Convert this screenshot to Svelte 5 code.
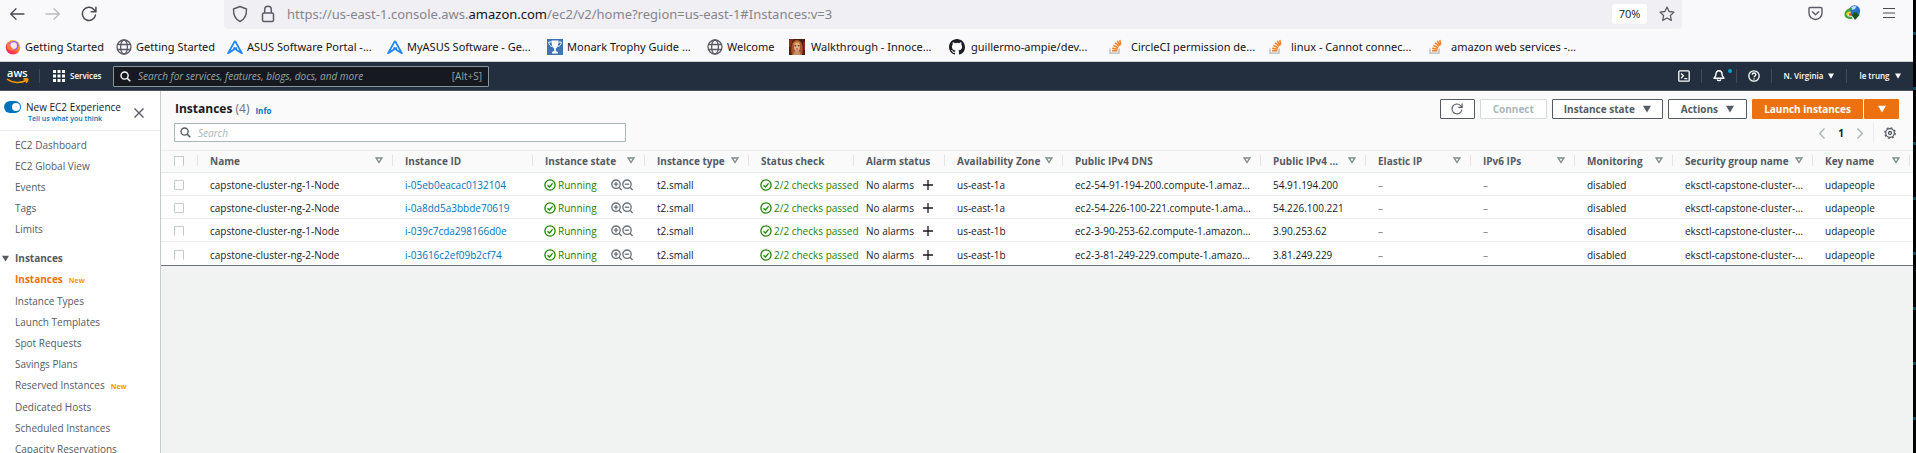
<script>
  const bookmarks = [
    { icon: 'fox', label: 'Getting Started', w: 111 },
    { icon: 'globe', label: 'Getting Started', w: 111 },
    { icon: 'asus', label: 'ASUS Software Portal -...', w: 160 },
    { icon: 'asus', label: 'MyASUS Software - Ge...', w: 160 },
    { icon: 'trophy', label: 'Monark Trophy Guide ...', w: 160 },
    { icon: 'globe', label: 'Welcome', w: 82 },
    { icon: 'face', label: 'Walkthrough - Innoce...', w: 160, roomy: true },
    { icon: 'github', label: 'guillermo-ampie/dev...', w: 160, roomy: true },
    { icon: 'stack', label: 'CircleCI permission de...', w: 160, roomy: true },
    { icon: 'stack', label: 'linux - Cannot connec...', w: 160, roomy: true },
    { icon: 'stack', label: 'amazon web services -...', w: 160, roomy: true }
  ];

  const topLinks = ['EC2 Dashboard', 'EC2 Global View', 'Events', 'Tags', 'Limits'];
  const instanceLinks = [
    { label: 'Instances', active: true, isNew: true },
    { label: 'Instance Types' },
    { label: 'Launch Templates' },
    { label: 'Spot Requests' },
    { label: 'Savings Plans' },
    { label: 'Reserved Instances', isNew: true },
    { label: 'Dedicated Hosts' },
    { label: 'Scheduled Instances' },
    { label: 'Capacity Reservations' }
  ];

  const columns = [
    { label: 'Name', w: 195, filter: true },
    { label: 'Instance ID', w: 140 },
    { label: 'Instance state', w: 112, filter: true },
    { label: 'Instance type', w: 104, filter: true },
    { label: 'Status check', w: 105 },
    { label: 'Alarm status', w: 91 },
    { label: 'Availability Zone', w: 118, filter: true },
    { label: 'Public IPv4 DNS', w: 198, filter: true },
    { label: 'Public IPv4 ...', w: 105, filter: true },
    { label: 'Elastic IP', w: 105, filter: true },
    { label: 'IPv6 IPs', w: 104, filter: true },
    { label: 'Monitoring', w: 98, filter: true },
    { label: 'Security group name', w: 140, filter: true },
    { label: 'Key name', w: 0, filter: true }
  ];

  const rows = [
    { name: 'capstone-cluster-ng-1-Node', id: 'i-05eb0eacac0132104', az: 'us-east-1a', dns: 'ec2-54-91-194-200.compute-1.amaz…', ip: '54.91.194.200' },
    { name: 'capstone-cluster-ng-2-Node', id: 'i-0a8dd5a3bbde70619', az: 'us-east-1a', dns: 'ec2-54-226-100-221.compute-1.ama…', ip: '54.226.100.221' },
    { name: 'capstone-cluster-ng-1-Node', id: 'i-039c7cda298166d0e', az: 'us-east-1b', dns: 'ec2-3-90-253-62.compute-1.amazon…', ip: '3.90.253.62' },
    { name: 'capstone-cluster-ng-2-Node', id: 'i-03616c2ef09b2cf74', az: 'us-east-1b', dns: 'ec2-3-81-249-229.compute-1.amazo…', ip: '3.81.249.229' }
  ];
</script>

{#snippet favicon(kind)}
  {#if kind === 'fox'}
    <svg width="16" height="16" viewBox="0 0 16 16">
      <defs>
        <linearGradient id="fx" x1="1" y1="0" x2="0.2" y2="1">
          <stop offset="0" stop-color="#ffe14d" /><stop offset=".4" stop-color="#ff9a2e" /><stop offset=".75" stop-color="#ff3d4f" /><stop offset="1" stop-color="#f0206e" />
        </linearGradient>
      </defs>
      <circle cx="8" cy="8.3" r="7.3" fill="url(#fx)" />
      <circle cx="9" cy="6.5" r="4.6" fill="#9a5cf0" />
      <circle cx="8.6" cy="6.6" r="3.4" fill="#f3e6fb" />
      <path d="M2.2 4c2 .2 3 1 3.2 2.600.5 2 2 3.500 4.600 3.800-2 1.800-7 1.400-8.300-2z" fill="#ff7a3c" />
    </svg>
  {:else if kind === 'globe'}
    <svg width="16" height="16" viewBox="0 0 16 16" fill="none" stroke="#5b5b66" stroke-width="1.3">
      <circle cx="8" cy="8" r="7" /><ellipse cx="8" cy="8" rx="3.400" ry="7" /><path d="M1.500 5.500h13M1.500 10.500h13" />
    </svg>
  {:else if kind === 'asus'}
    <svg width="16" height="16" viewBox="0 0 17 16" fill="none" stroke="#1c86f2" stroke-width="1.900" stroke-linejoin="round">
      <path d="M8.500 1.500 1.200 14.500l9.300-5.800M8.500 1.500l7.300 13-4.800-2.700-4-3.300" />
    </svg>
  {:else if kind === 'trophy'}
    <svg width="16" height="16" viewBox="0 0 16 16">
      <rect width="16" height="16" fill="#3c74b4" />
      <path d="M4.500 1.500h7c0 4-.8 7-2.700 8v2.500l2.200 1v1.500H5V13l2.200-1V9.500c-1.900-1-2.700-4-2.700-8z" fill="#fff" />
      <path d="M4.500 3H1.800c0 2.500 1 4 3.500 4.500M11.500 3h2.700c0 2.500-1 4-3.500 4.500" fill="none" stroke="#fff" />
    </svg>
  {:else if kind === 'face'}
    <svg width="16" height="16" viewBox="0 0 16 16">
      <rect width="16" height="16" fill="#4a1f16" />
      <path d="M3 16C1 9 3 1 8 1s7 7 5 15z" fill="#a8552a" />
      <path d="M0 0h4L2 8H0zM14 3h2v8h-1z" fill="#8d2a1c" />
      <ellipse cx="8" cy="7.500" rx="3" ry="4.500" fill="#e3b08a" />
      <path d="M5.500 6.800h1.800M8.800 6.800h1.800" stroke="#3c1c14" /><path d="M7 10h2" stroke="#a33a30" />
      <path d="M6 12h4l2 4H4z" fill="#c98d68" /><path d="M4 6c0-4 7-5 7.500-1L8 3.500z" fill="#d58240" />
    </svg>
  {:else if kind === 'github'}
    <svg width="16" height="16" viewBox="0 0 16 16" fill="#1b1f23">
      <path d="M8 0C3.58 0 0 3.58 0 8c0 3.540 2.290 6.530 5.470 7.590.4.070.55-.17.55-.38 0-.19-.01-.82-.01-1.490-2.010.37-2.530-.49-2.690-.94-.09-.23-.48-.94-.82-1.130-.28-.15-.68-.52-.01-.53.63-.01 1.080.58 1.230.82.72 1.210 1.870.87 2.330.66.07-.52.28-.87.51-1.070-1.780-.2-3.640-.89-3.640-3.950 0-.87.31-1.590.82-2.150-.08-.2-.36-1.020.08-2.120 0 0 .67-.21 2.200.82a7.600 7.600 0 0 1 4 0c1.530-1.040 2.200-.82 2.200-.82.44 1.100.16 1.920.08 2.120.51.56.82 1.270.82 2.150 0 3.070-1.870 3.750-3.650 3.950.29.25.54.73.54 1.480 0 1.070-.01 1.930-.01 2.200 0 .21.15.46.55.38A8.010 8.010 0 0 0 16 8c0-4.420-3.580-8-8-8z" />
    </svg>
  {:else}
    <svg width="16" height="16" viewBox="0 0 16 16" fill="none">
      <path d="M1 9.500v4.700h9V9.500" stroke="#b3b8bd" stroke-width="1.300" />
      <path d="M3 11.800h5.500M3.200 9.200l5.500 1M4.300 6.500l5 2.200M6 3.800l4.200 3.400M8.300 2l3 4.500M10.800 1l1 4.500" stroke="#f48024" stroke-width="1.500" />
    </svg>
  {/if}
{/snippet}

{#snippet reload(size)}
  <svg width={size} height={size} viewBox="0 0 16 16" fill="none" stroke="currentColor" stroke-width="1.500" stroke-linecap="round">
    <path d="M14.500 9a6.600 6.600 0 1 1-1.700-5.600L14.300 5" /><path d="M14.900 1.200v4.600h-4.600" />
  </svg>
{/snippet}

{#snippet mag(size)}
  <svg width={size} height={size} viewBox="0 0 12 12" fill="none" stroke="currentColor" stroke-width="1.500">
    <circle cx="5" cy="5" r="3.900" /><path d="M7.900 7.900 11.200 11.200" stroke-width="1.800" />
  </svg>
{/snippet}

{#snippet zoomIcon(plus)}
  <svg width="11" height="12" viewBox="0 0 11 12" fill="none" stroke="#687078" stroke-width="1.300">
    <circle cx="5" cy="5.200" r="4.200" /><path d="M8 8.200l2.600 2.800" /><path d={plus ? 'M2.800 5.200h4.400M5 3v4.400' : 'M2.800 5.200h4.400'} />
  </svg>
{/snippet}

{#snippet caret(size)}
  <svg class="caret" width={size} height={size} viewBox="0 0 8 8" fill="currentColor"><path d="M0 .8h8L4 7.500z" /></svg>
{/snippet}

{#snippet check()}
  <svg width="12" height="12" viewBox="0 0 12 12" fill="none" stroke="#1d8102" stroke-width="1.300">
    <circle cx="6" cy="6" r="5.100" /><path d="M3.500 6.200 5.400 8l3.200-3.600" />
  </svg>
{/snippet}

<div class="screen">
  <div class="window">
    <div class="toolbar">
      <div class="nav">
        <button aria-label="Back"><svg width="16" height="16" viewBox="0 0 16 16" fill="none" stroke="#4a4a55" stroke-width="1.300" stroke-linecap="round" stroke-linejoin="round"><path d="M15 8H2M7 2.800 1.700 8 7 13.200" /></svg></button>
        <button aria-label="Forward"><svg width="16" height="16" viewBox="0 0 16 16" fill="none" stroke="#b9b9c0" stroke-width="1.300" stroke-linecap="round" stroke-linejoin="round"><path d="M1 8h13M9 2.800 14.300 8 9 13.200" /></svg></button>
        <button aria-label="Reload">{@render reload(16)}</button>
      </div>
      <div class="address">
        <svg width="16" height="18" viewBox="0 0 16 18" fill="none" stroke="#5b5b66" stroke-width="1.400" stroke-linejoin="round"><path d="M8 1.500 14.500 4c.2 6-2 10.500-6.500 12.500C3.500 14.500 1.300 10 1.500 4z" /></svg>
        <svg width="14" height="18" viewBox="0 0 14 18" fill="none" stroke="#5b5b66" stroke-width="1.500"><rect x="1.500" y="8" width="11" height="8.500" rx="1.500" /><path d="M3.700 8V4.500a3.300 3.300 0 0 1 6.600 0V8" /></svg>
        <span class="url">https://us-east-1.console.aws.<b>amazon.com</b>/ec2/v2/home?region=us-east-1#Instances:v=3</span>
        <button class="zoom">70%</button>
        <button aria-label="Bookmark this page"><svg width="16" height="16" viewBox="0 0 16 16" fill="none" stroke="#5b5b66" stroke-width="1.300" stroke-linejoin="round"><path d="m8 1 2.100 4.500 4.900.6-3.600 3.400.9 4.900L8 12l-4.300 2.400.9-4.900L1 6.100l4.900-.6z" /></svg></button>
      </div>
      <div class="tools">
        <button aria-label="Save to Pocket"><svg width="15" height="15" viewBox="0 0 15 15" fill="none" stroke="#5b5b66" stroke-width="1.400" stroke-linecap="round" stroke-linejoin="round"><path d="M2.200 1.500h10.600c.8 0 1.200.5 1.200 1.200V7a6.500 6.500 0 0 1-13 0V2.700c0-.7.4-1.200 1.200-1.200z" /><path d="m4.300 5.800 3.200 3 3.200-3" /></svg></button>
        <button aria-label="Download manager"><svg width="17" height="16" viewBox="0 0 17 16"><circle cx="10.500" cy="6" r="5.700" fill="#2d6fc4" /><path d="M7 2.500c1.500-1.500 4-2 5.500-1L11 4 8.500 5z" fill="#b9dcf7" /><path d="M.5 9C1 5 4 3 7.500 3.500L6 6.500C4 6.800 3 8 3.200 10.500 4.500 12 7 12 8 11.500L8.500 14C4 14.500 0 12.500.5 9z" fill="#3fa535" /><path d="M2 9.500C2.500 7 4.500 6 7 6.500l-.5 2C5 8.500 4.300 9.500 5 10.500z" fill="#f2d431" /><path d="M5 8.500h3l-.5 2-2 .5z" fill="#d8402c" /><path d="M7.500 9.500h2V7.500h4v2H16l-5 5.500z" fill="#17551a" /></svg></button>
        <button aria-label="Menu"><svg width="14" height="12" viewBox="0 0 14 12" stroke="#4a4a55" stroke-width="1.200"><path d="M1 1.500h12M1 6h12M1 10.500h12" /></svg></button>
      </div>
    </div>

    <div class="bookmarks">
      {#each bookmarks as b}
        <a href="#bookmark" class:roomy={b.roomy} style="width:{b.w}px">{@render favicon(b.icon)}<span>{b.label}</span></a>
      {/each}
    </div>

    <header class="aws">
      <a class="logo" href="#home" aria-label="aws">
        <span>aws</span>
        <svg width="24" height="6" viewBox="0 0 24 6" fill="none" stroke="#f90" stroke-width="1.500"><path d="M1 1c6 4.500 14 4.500 20 1M17.500 1.200c2-.7 4-.5 4.200 0s-.2 2-1.500 3.500" /></svg>
      </a>
      <i class="bar"></i>
      <button class="services">
        <svg width="12" height="12" viewBox="0 0 12 12" fill="#fff"><path d="M0 0h3v3H0zM4.500 0h3v3h-3zM9 0h3v3H9zM0 4.500h3v3H0zM4.500 4.500h3v3h-3zM9 4.500h3v3H9zM0 9h3v3H0zM4.500 9h3v3h-3zM9 9h3v3H9z" /></svg>
        Services
      </button>
      <label class="find">
        {@render mag(11)}
        <input type="text" aria-label="Search AWS" placeholder="Search for services, features, blogs, docs, and more" />
        <span>[Alt+S]</span>
      </label>
      <div class="account">
        <button class="c1" aria-label="CloudShell"><svg width="12" height="12" viewBox="0 0 12 12" fill="none" stroke="#fff" stroke-width="1.300"><rect x=".8" y=".8" width="10.400" height="10.400" rx="1" /><path d="m3 3.500 2.500 2.300L3 8.200M6.300 8.700h3" /></svg></button>
        <button class="c2" aria-label="Notifications"><svg width="12" height="12" viewBox="0 0 12 12" fill="none" stroke="#fff" stroke-width="1.400" stroke-linejoin="round"><path d="M6 .8c2 0 3 1.500 3 3.200 0 2 1 2.800 2 4.200H1C2 6.800 3 6 3 4 3 2.300 4 .8 6 .8z" /><path d="M4.200 9.300c.3 1.800 3.300 1.800 3.600 0" /></svg><i class="dot"></i></button>
        <button class="c3" aria-label="Help"><svg width="12" height="12" viewBox="0 0 12 12" fill="none" stroke="#fff" stroke-width="1.300"><circle cx="6" cy="6" r="5.200" /><path d="M4.200 4.700c0-2.300 3.600-2.300 3.600 0C7.800 6 6 6 6 7.300M6 8.200v1.300" /></svg></button>
        <button class="c4">N. Virginia {@render caret(6)}</button>
        <button class="c5">le trung {@render caret(6)}</button>
      </div>
    </header>

    <div class="body">
      <aside>
        <div class="experience">
          <button class="toggle" role="switch" aria-checked="true" aria-label="New EC2 Experience"></button>
          <div>
            <p>New EC2 Experience</p>
            <a href="#feedback">Tell us what you think</a>
          </div>
          <button class="close" aria-label="Close"><svg width="10" height="10" viewBox="0 0 10 10" stroke="#545b64" stroke-width="1.400"><path d="m.5.5 9 9M9.500.5l-9 9" /></svg></button>
        </div>
        <nav>
          {#each topLinks as l}<a href="#nav">{l}</a>{/each}
          <h3>{@render caret(7)}Instances</h3>
          {#each instanceLinks as l}
            <a href="#nav" class:active={l.active}>{l.label}{#if l.isNew}<small>New</small>{/if}</a>
          {/each}
        </nav>
      </aside>

      <main>
        <section>
          <div class="heading">
            <h1>Instances <span>(4)</span></h1>
            <a href="#info">Info</a>
            <div class="actions">
              <button aria-label="Refresh" class="square">{@render reload(12)}</button>
              <button class="off" disabled>Connect</button>
              <button class="wide">Instance state {@render caret(8)}</button>
              <button>Actions {@render caret(8)}</button>
              <div class="split"><button class="primary wide">Launch instances</button><button class="primary square" aria-label="More launch options">{@render caret(8)}</button></div>
            </div>
          </div>
          <div class="filter">
            <label>{@render mag(11)}<input type="text" aria-label="Search instances" placeholder="Search" /></label>
            <div class="pager">
              <button aria-label="Previous page"><svg width="6" height="11" viewBox="0 0 6 11" fill="none" stroke="#aab7b8" stroke-width="1.400"><path d="M5.500.5.800 5.500l4.700 5" /></svg></button>
              <b>1</b>
              <button aria-label="Next page"><svg width="6" height="11" viewBox="0 0 6 11" fill="none" stroke="#aab7b8" stroke-width="1.400"><path d="m.5.500 4.700 5-4.700 5" /></svg></button>
              <button class="gear" aria-label="Preferences"><svg width="12" height="12" viewBox="0 0 12 12" fill="none" stroke="#545b64"><circle cx="6" cy="6" r="4.300" stroke-width="1.200" /><circle cx="6" cy="6" r="5.300" stroke-width="1.200" stroke-dasharray="2 2.160" /><circle cx="6" cy="6" r="1.500" stroke-width="1.300" /></svg></button>
            </div>
          </div>
          <table>
            <colgroup>
              <col style="width:37px" />
              {#each columns as c}<col style={c.w ? `width:${c.w}px` : ''} />{/each}
            </colgroup>
            <thead>
              <tr>
                <th><div class="pick"><input type="checkbox" class="open" aria-label="Select all instances" /></div></th>
                {#each columns as c}
                  <th><div><span>{c.label}</span>{#if c.filter}<svg width="8" height="7" viewBox="0 0 8 7" fill="none" stroke="#7f8c8d" stroke-width="1.400"><path d="M1.200 1h5.600L4 5.500z" /></svg>{/if}</div></th>
                {/each}
              </tr>
            </thead>
            <tbody>
              {#each rows as r, i}
                <tr>
                  <td class="pick"><input type="checkbox" class:open={i > 1} aria-label="Select {r.name}" /></td>
                  <td>{r.name}</td>
                  <td><a href="#instance">{r.id}</a></td>
                  <td><div class="state">{@render check()}<span>Running</span>{@render zoomIcon(true)}{@render zoomIcon(false)}</div></td>
                  <td>t2.small</td>
                  <td><div class="state">{@render check()}<span>2/2 checks passed</span></div></td>
                  <td><div class="alarm">No alarms <svg width="10" height="10" viewBox="0 0 10 10" stroke="#16191f" stroke-width="1.300"><path d="M5 0v10M0 5h10" /></svg></div></td>
                  <td>{r.az}</td>
                  <td>{r.dns}</td>
                  <td>{r.ip}</td>
                  <td class="none">–</td>
                  <td class="none">–</td>
                  <td>disabled</td>
                  <td>eksctl-capstone-cluster-…</td>
                  <td>udapeople</td>
                </tr>
              {/each}
            </tbody>
          </table>
        </section>
      </main>
    </div>
  </div>
  <div class="edge"></div>
</div>

<style>
  :global(body) { margin: 0; background: #f1f3f3; }
  .screen { display: flex; height: 100vh; overflow: hidden; font: 10px/14px "Open Sans", "Noto Sans", sans-serif; color: #16191f; }
  .screen * { box-sizing: border-box; }
  .window { flex: 1; min-width: 0; display: flex; flex-direction: column; }
  .edge { width: 3px; background: repeating-linear-gradient(#020304 0 32px, #0b4a5c 32px 35px, #020304 35px 55px); }
  button { font: inherit; color: inherit; border: 0; background: none; padding: 0; margin: 0; display: flex; align-items: center; justify-content: center; }
  a { text-decoration: none; color: #0073bb; }
  svg { flex: none; display: block; }
  input { font: inherit; min-width: 0; }
  p, h1, h3 { margin: 0; }

  .toolbar { display: flex; height: 29px; background: #f9f9fb; flex: none; }
  .nav { width: 224px; display: flex; gap: 20px; padding: 0 0 1px 9px; align-items: center; color: #4a4a55; }
  .address { flex: 1; display: flex; align-items: center; background: #f0eff4; border-radius: 0 0 4px 4px; padding: 0 7px 2px 8px; }
  .address svg + svg { margin-left: 13px; }
  .url { flex: 1; margin-left: 12px; font-family: "Noto Sans", "Open Sans", sans-serif; font-size: 13px; line-height: 20px; color: #85858d; white-space: nowrap; }
  .url b { color: #15141a; font-weight: 400; }
  .zoom { width: 35px; height: 20px; margin-right: 12px; background: #fff; border-radius: 3px; font-size: 11px; color: #15141a; }
  .tools { width: 231px; display: flex; align-items: center; justify-content: flex-end; gap: 21px; padding: 0 17px 3px 0; }

  .bookmarks { display: flex; height: 33px; padding: 4px 0 0 5px; background: #f9f9fb; border-bottom: 1px solid #ccd2d2; align-items: center; flex: none; }
  .bookmarks a { display: flex; align-items: center; gap: 4px; color: #15141a; font-family: "Noto Sans", "Open Sans", sans-serif; font-size: 11px; line-height: 16px; white-space: nowrap; }
  .bookmarks a.roomy { gap: 6px; }

  .aws { display: flex; align-items: center; height: 29px; background: #232f3e; border-bottom: 1px solid #4a5460; color: #fff; flex: none; font-size: 8px; font-weight: 600; }
  .logo { width: 33px; padding-left: 6px; color: #fff; font-size: 11px; line-height: 9px; }
  .logo svg { margin-top: 1px; }
  .logo span { padding-left: 1px; }
  .bar { width: 1px; height: 14px; background: #414d5c; margin: 0 13px 0 6px; }
  .services { gap: 5px; width: 60px; justify-content: flex-start; }
  .find { display: flex; align-items: center; width: 376px; height: 21px; background: #16191f; border: 1px solid #879596; border-radius: 1px; padding: 0 6px; font-size: 10px; font-weight: 400; color: #fff; }
  .find input { flex: 1; margin-left: 5px; background: none; border: 0; color: #fff; outline: 0; }
  .find input::placeholder { color: #95a5a6; font-style: italic; opacity: 1; }
  .find span { color: #95a5a6; }
  .account { margin-left: auto; display: flex; align-items: center; }
  .account button { height: 14px; white-space: nowrap; border-right: 1px solid #414d5c; position: relative; gap: 5px; }
  .account .c1 { width: 36px; }
  .account .c2, .account .c3 { width: 35px; }
  .account .c4 { width: 75px; }
  .account .c5 { width: 66px; border: 0; }
  .dot { position: absolute; right: 4px; top: 0; width: 4px; height: 4px; border-radius: 50%; background: #00a1c9; }

  .body { display: flex; flex: 1; min-height: 0; }
  aside { width: 161px; background: #fff; border-right: 1px solid #c5cccc; color: #545b64; overflow: hidden; flex: none; }
  .experience { display: flex; height: 40px; border-bottom: 1px solid #eaeded; padding: 10px 16px 0 4px; }
  .experience p { color: #16191f; line-height: 12px; white-space: nowrap; }
  .experience div { margin-left: 5px; }
  .experience div a { display: block; font-size: 7px; line-height: 12px; padding-left: 2px; font-weight: 600; white-space: nowrap; }
  .toggle { width: 17px; height: 12px; border-radius: 6px; background: #0073bb; justify-content: flex-end; padding-right: 1px; }
  .toggle::after { content: ""; width: 8px; height: 8px; border-radius: 50%; background: #fff; }
  .close { margin: 7px 0 0 auto; height: 10px; }
  nav { padding-top: 4px; display: flex; flex-direction: column; }
  nav a, nav h3 { font-size: 10px; line-height: 21px; color: #545b64; padding-left: 15px; white-space: nowrap; }
  nav h3 { display: flex; align-items: center; gap: 6px; padding-left: 2px; margin-top: 8px; font-weight: 700; }
  nav a.active { color: #ec7211; font-weight: 700; }
  nav small { font-size: 7px; font-weight: 700; color: #ff9900; margin-left: 6px; }

  main { flex: 1; min-width: 0; background: #f1f3f3; }
  section { background: #fafafa; border-bottom: 1px solid #687078; }
  .heading { display: flex; align-items: center; height: 28px; padding: 8px 14px 0; }
  h1 { font-size: 12px; line-height: 18px; font-weight: 700; }
  h1 span { font-weight: 400; color: #687078; }
  .heading > a { font-size: 8px; font-weight: 700; margin: 3px 0 0 6px; }
  .actions { margin-left: auto; display: flex; gap: 5px; font-weight: 700; color: #545b64; }
  .actions button { height: 20px; border: 1px solid #545b64; border-radius: 1px; background: #fff; padding: 0 12px; gap: 8px; white-space: nowrap; }
  .actions .wide { width: 111px; padding: 0; }
  .actions .square { width: 35px; padding: 0; }
  .actions .off { color: #aab7b8; border-color: #d5dbdb; }
  .split { display: flex; gap: 1px; }
  .actions .primary { background: #ec7211; border-color: #ec7211; color: #fff; }
  .filter { display: flex; justify-content: space-between; height: 31px; padding: 4px 15px 0 13px; align-items: flex-start; }
  .filter label { display: flex; align-items: center; width: 452px; height: 19px; background: #fff; border: 1px solid #aab7b8; border-radius: 1px; padding: 0 5px; color: #545b64; }
  .filter input { flex: 1; border: 0; outline: 0; background: none; margin-left: 5px; }
  .filter input::placeholder { color: #aab7b8; font-style: italic; opacity: 1; }
  .pager { display: flex; align-items: center; height: 20px; gap: 13px; font-size: 10px; margin-right: 2px; }
  .gear { border-left: 1px solid #eaeded; height: 20px; padding-left: 10px; margin-left: -3px; }

  table { width: 100%; table-layout: fixed; border-collapse: separate; border-spacing: 0; }
  th { height: 23px; padding: 0 0 2px; border-top: 1px solid #eaeded; border-bottom: 1px solid #e3e9e9; text-align: left; color: #545b64; font-weight: 700; }
  th div { display: flex; align-items: center; justify-content: space-between; height: 11px; padding: 0 9px 0 12px; border-right: 1px solid #e1e5e5; white-space: nowrap; }
  th:last-child { padding-right: 3px; }
  td { height: 23px; padding: 2px 0 0 12px; background: #fff; border-bottom: 1px solid #eaeded; white-space: nowrap; }
  tr:last-child td { border-bottom: 0; }
  .pick { padding-left: 13px; }
  .none { color: #879596; font-weight: 600; }
  input[type="checkbox"] { appearance: none; display: block; width: 10px; height: 10px; margin: 0; border: 1px solid #c3cccc; border-radius: 1px; background: #fff; }
  input.open { border-bottom: 0; }
  .state { display: flex; align-items: center; gap: 2px; color: #1d8102; margin-left: -1px; }
  .state span { margin-right: auto; }
  td:nth-child(4) { padding-right: 12px; }
  td:nth-child(4) .state { gap: 0; }
  td:nth-child(4) .state span { margin-left: 2px; }
  .alarm { display: flex; align-items: center; justify-content: space-between; padding-right: 12px; }
</style>
